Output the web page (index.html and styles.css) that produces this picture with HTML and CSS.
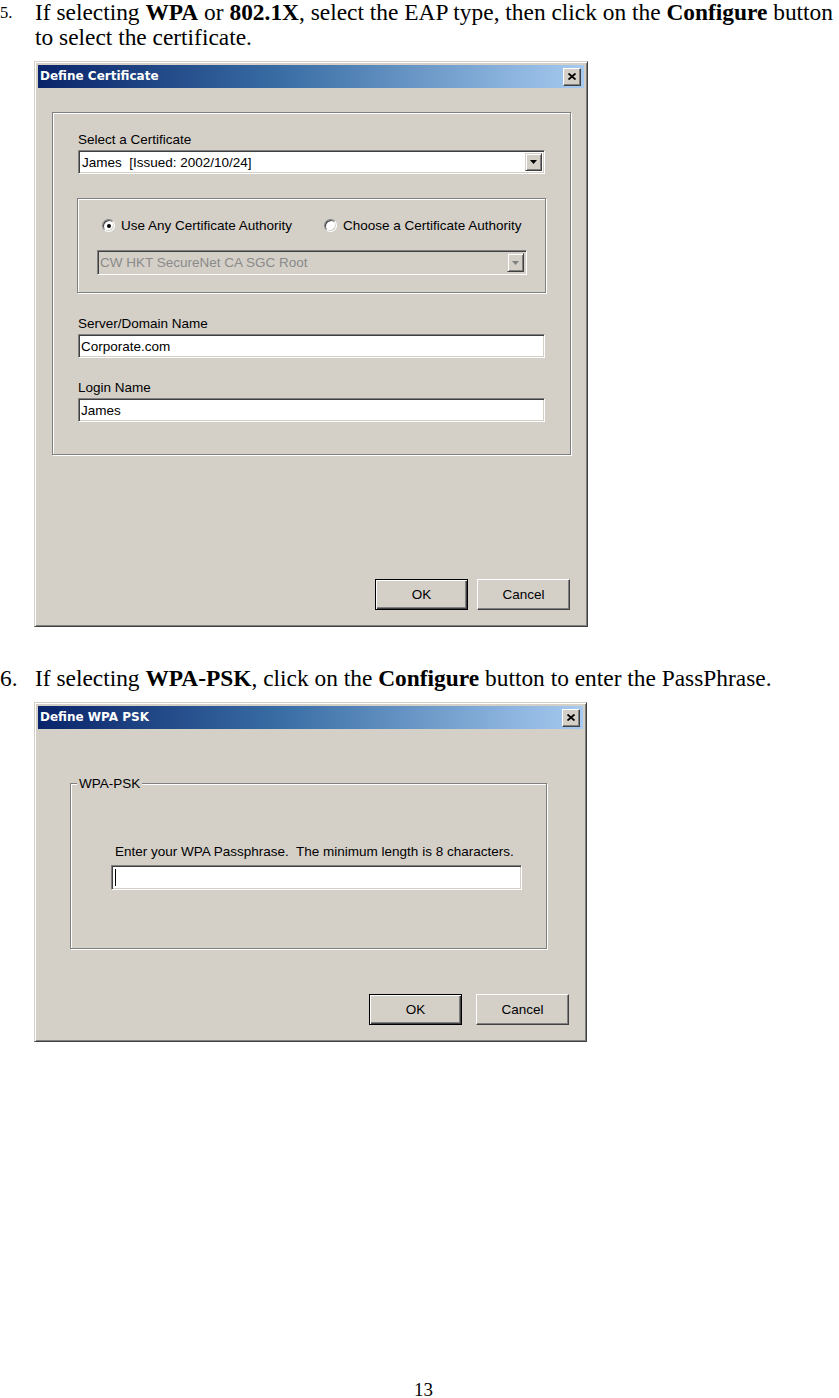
FILE: index.html
```html
<!DOCTYPE html>
<html lang="en">
<head>
<meta charset="utf-8">
<title>Define Certificate / Define WPA PSK</title>
<link rel="stylesheet" href="styles.css">
</head>
<body>
  <div class="step step-first">
    <span class="num num-small">5.</span>
    <span class="step-text">If selecting <b>WPA</b> or <b>802.1X</b>, select the EAP type, then click on the <b>Configure</b> button<br>to select the certificate.</span>
  </div>

  <div class="shot shot-cert">
    <div class="win win-cert">
      <div class="titlebar">
        <span class="title">Define Certificate</span>
        <span class="close"><svg width="8" height="7" viewBox="0 0 8 7"><path d="M0.5 0.5 L7.5 6.5 M7.5 0.5 L0.5 6.5" stroke="#000" stroke-width="1.8" fill="none"/></svg></span>
      </div>
      <div class="win-body">
        <div class="group group-main">
          <div class="label">Select a Certificate</div>
          <div class="combo">
            <span class="combo-text">James  [Issued: 2002/10/24]</span>
            <span class="combo-btn"><svg width="7" height="4" viewBox="0 0 7 4"><path d="M0 0 H7 L3.5 4 Z" fill="#000"/></svg></span>
          </div>
          <div class="group group-ca">
            <div class="radios">
              <div class="radio-opt"><span class="radio checked"></span><span>Use Any Certificate Authority</span></div>
              <div class="radio-opt"><span class="radio"></span><span>Choose a Certificate Authority</span></div>
            </div>
            <div class="combo combo-disabled">
              <span class="combo-text">CW HKT SecureNet CA SGC Root</span>
              <span class="combo-btn"><svg width="7" height="4" viewBox="0 0 7 4"><path d="M0 0 H7 L3.5 4 Z" fill="#808080"/></svg></span>
            </div>
          </div>
          <div class="label label-gap">Server/Domain Name</div>
          <div class="field">Corporate.com</div>
          <div class="label label-gap2">Login Name</div>
          <div class="field">James</div>
        </div>
        <div class="buttons buttons-cert">
          <span class="btn btn-default">OK</span>
          <span class="btn">Cancel</span>
        </div>
      </div>
    </div>
  </div>

  <div class="step step-second">
    <span class="num">6.</span>
    <span class="step-text">If selecting <b>WPA-PSK</b>, click on the <b>Configure</b> button to enter the PassPhrase.</span>
  </div>

  <div class="shot shot-psk">
    <div class="win win-psk">
      <div class="titlebar">
        <span class="title">Define WPA PSK</span>
        <span class="close"><svg width="8" height="7" viewBox="0 0 8 7"><path d="M0.5 0.5 L7.5 6.5 M7.5 0.5 L0.5 6.5" stroke="#000" stroke-width="1.8" fill="none"/></svg></span>
      </div>
      <div class="win-body win-body-psk">
        <div class="group group-psk">
          <span class="legend">WPA-PSK</span>
          <div class="psk-text">Enter your WPA Passphrase.&nbsp; The minimum length is 8 characters.</div>
          <div class="field field-psk"><span class="caret"></span></div>
        </div>
        <div class="buttons buttons-psk">
          <span class="btn btn-default">OK</span>
          <span class="btn">Cancel</span>
        </div>
      </div>
    </div>
  </div>

  <div class="page-num">13</div>
</body>
</html>
```
FILE: styles.css
```css
html {
  margin: 0;
  overflow: hidden;
  background: #fff;
}
body {
  margin: 0;
  width: 839px;
  height: 1398px;
  display: flex;
  flex-direction: column;
  font-family: "Liberation Serif", "Times New Roman", serif;
  color: #000;
}

.step {
  display: grid;
  grid-template-columns: 35px 1fr;
  font-size: 23.4px;
  line-height: 25px;
  white-space: nowrap;
}
.step-first { margin-top: 0; }
.step-second { margin-top: 39px; }
.num-small { font-size: 16.5px; }

.shot { padding-left: 34px; }
.shot-cert { margin-top: 11px; }
.shot-psk { margin-top: 11px; }

.win {
  box-sizing: border-box;
  border: 1px solid;
  border-color: #d4d0c8 #404040 #404040 #d4d0c8;
  box-shadow: inset 1px 1px 0 #fff, inset -1px -1px 0 #808080;
  background: #d4d0c8;
  padding: 3px;
  display: flex;
  flex-direction: column;
  font-family: "Liberation Sans", Arial, sans-serif;
  font-size: 13.5px;
  line-height: 15px;
  color: #000;
}
.win-cert { width: 554px; height: 566px; }
.win-psk { width: 553px; height: 340px; }

.titlebar {
  height: 23px;
  flex: none;
  display: flex;
  align-items: center;
  justify-content: space-between;
  padding: 0 3px 0 2px;
  background: linear-gradient(90deg, #0a246a 0%, #3a6ea5 45%, #a6caf0 100%);
}
.title {
  color: #fff;
  font-family: "DejaVu Sans", Verdana, sans-serif;
  font-weight: bold;
  font-size: 12px;
}
.close {
  box-sizing: border-box;
  width: 18px;
  height: 18px;
  display: flex;
  align-items: center;
  justify-content: center;
  background: #d4d0c8;
  border: 1px solid;
  border-color: #fff #404040 #404040 #fff;
  box-shadow: inset -1px -1px 0 #808080;
}

.win-body {
  flex: 1;
  display: flex;
  flex-direction: column;
  padding: 24px 14px 13px 14px;
}
.win-body-psk { padding: 54px 14px 13px 32px; }

.group {
  position: relative;
  border: 1px solid #808080;
  box-shadow: inset 1px 1px 0 #fff, 1px 1px 0 #fff;
}
.group-main {
  margin-right: -1px;
  padding: 19px 25px 32px 25px;
}
.group-ca {
  margin: 24px -1px 0;
  padding: 19px 18px 17px 19px;
}
.group-psk {
  margin-right: 22px;
  padding: 60px 24px 58px 40px;
}

.label { height: 15px; margin-bottom: 3px; }
.label-gap { margin-top: 23px; }
.label-gap2 { margin-top: 22px; }

.combo, .field {
  box-sizing: border-box;
  height: 24px;
  display: flex;
  align-items: center;
  background: #fff;
  border: 1px solid;
  border-color: #808080 #fff #fff #808080;
  box-shadow: inset 1px 1px 0 #404040, inset -1px -1px 0 #d4d0c8;
}
.combo {
  padding: 2px;
  justify-content: space-between;
  align-items: stretch;
}
.combo-text {
  display: flex;
  align-items: center;
  white-space: pre;
  padding-left: 1px;
}
.combo-btn {
  box-sizing: border-box;
  width: 17px;
  display: flex;
  align-items: center;
  justify-content: center;
  background: #d4d0c8;
  border: 1px solid;
  border-color: #d4d0c8 #404040 #404040 #d4d0c8;
  box-shadow: inset 1px 1px 0 #fff, inset -1px -1px 0 #808080;
}
.combo-disabled {
  height: 25px;
  margin-top: 17px;
  background: #d4d0c8;
  color: #8a8a8a;
}
.combo-disabled .combo-text { padding-left: 0; }

.field { padding-left: 2px; }
.field-psk {
  height: 25px;
  margin-top: 6px;
}
.caret {
  width: 1px;
  height: 17px;
  background: #000;
  margin-left: 1px;
}

.radios {
  display: grid;
  grid-template-columns: 222px auto;
  padding-left: 5px;
  height: 15px;
}
.radio-opt {
  display: flex;
  align-items: center;
  gap: 6px;
}
.radio {
  box-sizing: border-box;
  width: 13px;
  height: 13px;
  border-radius: 50%;
  background: #fff;
  border: 1px solid;
  border-color: #808080 #fff #fff #808080;
  box-shadow: inset 1px 1px 0 #404040, inset -1px -1px 0 #d4d0c8;
  display: flex;
  align-items: center;
  justify-content: center;
}
.radio.checked::after {
  content: "";
  width: 4px;
  height: 4px;
  border-radius: 50%;
  background: #000;
}

.legend {
  position: absolute;
  top: -8px;
  left: 6px;
  padding: 0 2px;
  background: #d4d0c8;
  line-height: 15px;
}
.psk-text { margin-left: 4px; height: 15px; }

.buttons {
  margin-top: auto;
  display: flex;
  justify-content: flex-end;
}
.buttons-cert { gap: 9px; }
.buttons-psk { gap: 14px; }
.btn {
  box-sizing: border-box;
  width: 93px;
  height: 31px;
  display: flex;
  align-items: center;
  justify-content: center;
  background: #d4d0c8;
  border: 1px solid;
  border-color: #fff #404040 #404040 #fff;
  box-shadow: inset -1px -1px 0 #808080;
}
.btn-default {
  border-color: #000;
  box-shadow: inset 1px 1px 0 #fff, inset -1px -1px 0 #404040, inset -2px -2px 0 #808080;
}

.page-num {
  margin-top: auto;
  text-align: center;
  padding-left: 8px;
  font-size: 19px;
  line-height: 16px;
}
```
